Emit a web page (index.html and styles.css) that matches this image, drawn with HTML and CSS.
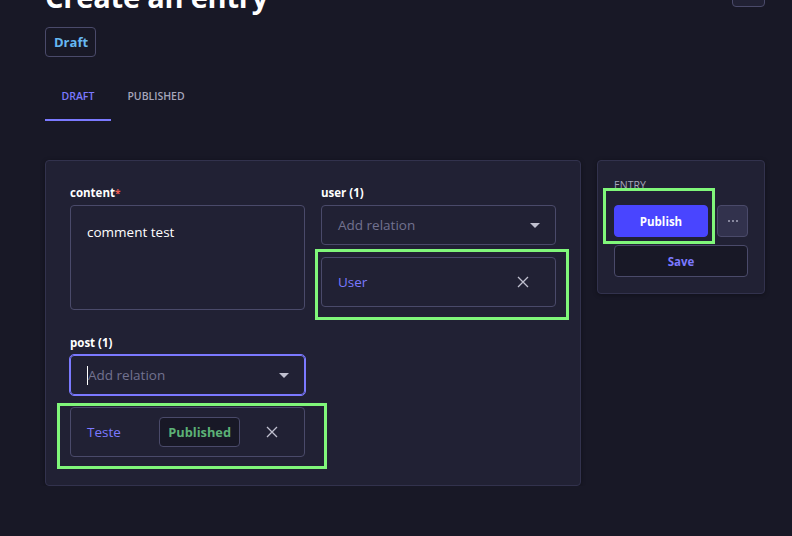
FILE: index.html
```html
<!DOCTYPE html>
<html lang="en">
<head>
<meta charset="utf-8">
<title>Create an entry</title>
<link rel="stylesheet" href="styles.css">
</head>
<body>
<div class="page">
  <header class="header">
    <div class="header-row">
      <h1 class="title">Create an entry</h1>
      <button class="icon-btn" aria-label="More"></button>
    </div>
    <span class="status">Draft</span>
  </header>

  <nav class="tabs">
    <span class="tab tab-active">DRAFT</span>
    <span class="tab">PUBLISHED</span>
  </nav>

  <div class="layout">
    <section class="card">
      <div class="grid">
        <div class="field">
          <label class="label">content<span class="req">*</span></label>
          <div class="textarea">comment test</div>
        </div>
        <div class="field">
          <label class="label">user (1)</label>
          <div class="select">
            <span class="placeholder">Add relation</span>
            <span class="caret"></span>
          </div>
          <div class="relation">
            <span class="rel-title">User</span>
            <button class="remove" aria-label="Remove">
              <svg width="12" height="12" viewBox="0 0 12 12"><path d="M1 1L11 11M11 1L1 11" stroke="#c0c0cf" stroke-width="1.3" fill="none"/></svg>
            </button>
            <span class="mark mark-user"></span>
          </div>
        </div>
        <div class="field">
          <label class="label">post (1)</label>
          <div class="select select-focus">
            <span class="cursor"></span>
            <span class="placeholder">Add relation</span>
            <span class="caret"></span>
          </div>
          <div class="relation">
            <span class="rel-title">Teste</span>
            <span class="badge">Published</span>
            <button class="remove" aria-label="Remove">
              <svg width="12" height="12" viewBox="0 0 12 12"><path d="M1 1L11 11M11 1L1 11" stroke="#c0c0cf" stroke-width="1.3" fill="none"/></svg>
            </button>
            <span class="mark mark-post"></span>
          </div>
        </div>
      </div>
    </section>

    <aside class="side">
      <div class="side-label">ENTRY</div>
      <div class="side-actions">
        <div class="publish-wrap">
          <button class="btn-publish">Publish</button>
          <span class="mark mark-publish"></span>
        </div>
        <button class="btn-more" aria-label="More actions">
          <svg width="12" height="4" viewBox="0 0 12 4"><circle cx="2" cy="2" r="1" fill="#a5a5ba"/><circle cx="6" cy="2" r="1" fill="#a5a5ba"/><circle cx="10" cy="2" r="1" fill="#a5a5ba"/></svg>
        </button>
      </div>
      <button class="btn-save">Save</button>
    </aside>
  </div>
</div>
</body>
</html>
```

FILE: styles.css
```css
* { box-sizing: border-box; }

html, body {
  margin: 0;
  background: #181826;
  font-family: "Open Sans", "Noto Sans", sans-serif;
  color: #ffffff;
  overflow: hidden;
}

.page {
  padding: 0 27px 0 45px;
}

.header-row {
  display: flex;
  justify-content: space-between;
  align-items: flex-start;
  margin-top: -26px;
}

.title {
  margin: 3px 0 0 0;
  font-size: 29px;
  line-height: 40px;
  font-weight: 700;
  letter-spacing: -0.2px;
}

.icon-btn {
  width: 33px;
  height: 33px;
  border: 1px solid #4a4a6a;
  border-radius: 4px;
  background: #212134;
  padding: 0;
}

.status {
  display: inline-flex;
  align-items: center;
  margin-top: 10px;
  height: 30px;
  padding: 0 7px 0 8px;
  border: 1px solid #4a4a6a;
  border-radius: 4px;
  color: #66b7f1;
  font-size: 13px;
  font-weight: 700;
}

.tabs {
  display: flex;
  margin-top: 16px;
}

.tab {
  height: 48px;
  display: flex;
  align-items: center;
  padding: 0 16.5px;
  font-size: 10.5px;
  font-weight: 600;
  color: #a5a5ba;
  border-bottom: 2px solid transparent;
}

.tab-active {
  color: #7b79ff;
  border-bottom-color: #7b79ff;
}

.layout {
  display: grid;
  grid-template-columns: 1fr 168px;
  gap: 16px;
  align-items: start;
  margin-top: 39px;
}

.card {
  background: #212134;
  border: 1px solid #32324d;
  border-radius: 4px;
  padding: 24px 24px 28px;
  box-shadow: 0 1px 4px rgba(3, 3, 5, 0.35);
}

.grid {
  display: grid;
  grid-template-columns: 1fr 1fr;
  column-gap: 16px;
  row-gap: 25px;
  align-items: start;
}

.field {
  display: flex;
  flex-direction: column;
}

.label {
  font-size: 11.5px;
  line-height: 16px;
  font-weight: 700;
  color: #ffffff;
  margin-bottom: 4px;
}

.req {
  color: #ee5e52;
  font-size: 10px;
  vertical-align: top;
}

.textarea {
  height: 105px;
  border: 1px solid #4a4a6a;
  border-radius: 4px;
  padding: 16px 16px;
  font-size: 13.5px;
  line-height: 20px;
  color: #ffffff;
}

.select {
  position: relative;
  height: 40px;
  display: flex;
  align-items: center;
  padding: 0 16px;
  border: 1px solid #4a4a6a;
  border-radius: 4px;
}

.select-focus {
  border-color: #7b79ff;
  outline: 1px solid #7b79ff;
}

.cursor {
  width: 1px;
  height: 19px;
  background: #ffffff;
}

.placeholder {
  flex: 1;
  font-size: 13.5px;
  color: #727290;
}

.caret {
  width: 0;
  height: 0;
  border-left: 5.5px solid transparent;
  border-right: 5.5px solid transparent;
  border-top: 5px solid #c0c0cf;
  margin-right: -1px;
}

.relation {
  position: relative;
  margin-top: 12px;
  height: 50px;
  display: flex;
  align-items: center;
  gap: 16px;
  padding: 0 16px;
  border: 1px solid #4a4a6a;
  border-radius: 4px;
  background: #212134;
}

.rel-title {
  flex: 1;
  font-size: 13.5px;
  color: #7b79ff;
}

.badge {
  display: flex;
  align-items: center;
  height: 30px;
  padding: 0 8px;
  border: 1px solid #4a4a6a;
  border-radius: 4px;
  background: #181826;
  color: #5cb176;
  font-size: 12.8px;
  font-weight: 700;
}

.remove {
  width: 32px;
  height: 32px;
  display: flex;
  align-items: center;
  justify-content: center;
  background: none;
  border: 0;
  padding: 0;
}

.mark {
  position: absolute;
  border: 3px solid #80f77a;
  pointer-events: none;
}

.mark-user { left: -7px; top: -9px; right: -14px; bottom: -14px; }
.mark-post { left: -14px; top: -5px; right: -23px; bottom: -13px; }
.mark-publish { left: -11px; top: -17px; right: -7px; bottom: -7px; }

.side {
  background: #212134;
  border: 1px solid #32324d;
  border-radius: 4px;
  padding: 16px;
  box-shadow: 0 1px 4px rgba(3, 3, 5, 0.35);
}

.side-label {
  font-size: 10.5px;
  line-height: 16px;
  color: #a5a5ba;
  font-weight: 400;
  margin-bottom: 12px;
}

.side-actions {
  display: flex;
  gap: 9px;
}

.publish-wrap {
  position: relative;
  flex: 1;
  display: flex;
}

.btn-publish {
  flex: 1;
  height: 32px;
  border: 1px solid #4945ff;
  border-radius: 4px;
  background: #4945ff;
  color: #ffffff;
  font-family: inherit;
  font-size: 11.5px;
  font-weight: 700;
}

.btn-more {
  width: 31px;
  height: 32px;
  border: 1px solid #4a4a6a;
  border-radius: 4px;
  background: #32324d;
  display: flex;
  align-items: center;
  justify-content: center;
  padding: 0;
}

.btn-save {
  display: block;
  width: 100%;
  margin-top: 8px;
  height: 32px;
  border: 1px solid #4a4a6a;
  border-radius: 4px;
  background: #181826;
  color: #7b79ff;
  font-family: inherit;
  font-size: 11.5px;
  font-weight: 700;
}
```
